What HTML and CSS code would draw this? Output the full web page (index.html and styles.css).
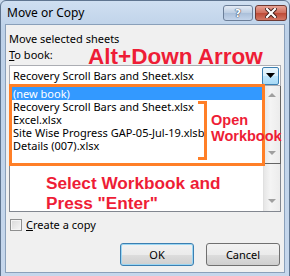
FILE: index.html
```html
<!DOCTYPE html>
<html lang="en">
<head>
    <meta charset="UTF-8">
    <title>Move or Copy</title>
    <link rel="stylesheet" href="styles.css">
</head>
<body>

    <div class="window">
        <div class="titlebar">
            <span class="title">Move or Copy</span>
            <div class="caption-buttons">
                <button class="cap-btn help">?</button>
                <button class="cap-btn close">
                    <svg width="12" height="10" viewBox="0 0 12 10">
                        <path d="M2 1 L10 9 M10 1 L2 9" stroke="#3b1a16" stroke-width="4" stroke-linecap="square"/>
                        <path d="M2 1 L10 9 M10 1 L2 9" stroke="#fff" stroke-width="2.2" stroke-linecap="square"/>
                    </svg>
                </button>
            </div>
        </div>

        <div class="client">
            <div class="label">Move selected sheets</div>
            <div class="label"><u>T</u>o book:</div>

            <div class="combo">
                <span class="combo-text">Recovery Scroll Bars and Sheet.xlsx</span>
                <span class="combo-arrow">
                    <svg width="9" height="5" viewBox="0 0 9 5"><path d="M0 0 H9 L4.5 5 Z" fill="#000"/></svg>
                </span>
            </div>

            <div class="dropdown">
                <div class="items">
                    <div class="item selected">(new book)</div>
                    <div class="item">Recovery Scroll Bars and Sheet.xlsx</div>
                    <div class="item">Excel.xlsx</div>
                    <div class="item">Site Wise Progress GAP-05-Jul-19.xlsb</div>
                    <div class="item">Details (007).xlsx</div>
                </div>
                <div class="scrollbar">
                    <span class="arrow up"></span>
                    <span class="arrow down"></span>
                </div>
            </div>

            <div class="listbox">
                <div class="list-area"></div>
                <div class="scrollbar">
                    <span class="arrow down"></span>
                </div>
            </div>

            <label class="check-row">
                <span class="checkbox"></span>
                <span><u>C</u>reate a copy</span>
            </label>

            <div class="buttons">
                <button class="btn default">OK</button>
                <button class="btn">Cancel</button>
            </div>

            <!-- annotations painted over the dialog -->
            <div class="note note-keys">Alt+Down Arrow</div>
            <div class="mark-box"></div>
            <div class="bracket"></div>
            <div class="note note-open">Open<br>Workbook</div>
            <div class="note note-select">Select Workbook and<br>Press "Enter"</div>
        </div>
    </div>

</body>
</html>
```

FILE: styles.css
```css
body {
    margin: 0;
    width: 290px;
    height: 276px;
    overflow: hidden;
    background: #c9d9ec;
    font-family: 'Noto Sans', 'Open Sans', sans-serif;
    font-size: 11px;
    color: #000;
}
.window {
    width: 288px;
    height: 282px;
    border: 1px solid #5f7590;
    border-radius: 6px 6px 0 0;
    background: linear-gradient(#cfdff1, #bdd1e8 30px, #c6d7ec);
}
.titlebar {
    height: 23px;
    display: flex;
    justify-content: space-between;
    align-items: flex-start;
    padding-left: 6px;
}
.title {
    font-size: 12px;
    margin-top: 3px;
    color: #000;
}
.caption-buttons {
    display: flex;
    gap: 2px;
    margin-top: 4px;
    margin-right: 2px;
}
.cap-btn {
    height: 16px;
    padding: 0;
    border-radius: 3px;
    display: flex;
    align-items: center;
    justify-content: center;
    font-family: 'DejaVu Sans', sans-serif;
    font-weight: bold;
    font-size: 11px;
}
.help {
    width: 30px;
    border: 1px solid #6c7f99;
    background: linear-gradient(#e3ebf5, #bccde2 50%, #aabfd9 51%, #c3d4ea);
    color: #fff;
    text-shadow: 0 0 1px #3d4d66, 0 0 1px #3d4d66, 0 0 1px #3d4d66;
}
.close {
    width: 32px;
    border: 1px solid #6e3a33;
    background: linear-gradient(#e7a295, #cf6d5b 50%, #bd4a36 51%, #d27664);
}
.client {
    position: relative;
    margin: 0 4px;
    height: 247px;
    background: #f0f0f0;
    border: 1px solid #8aa0ba;
    padding: 0 0 0 3px;
}
.label {
    height: 16px;
    line-height: 16px;
}
.label:first-child {
    margin-top: 6px;
}
.combo {
    display: flex;
    align-items: center;
    justify-content: space-between;
    width: 270px;
    height: 19px;
    margin-top: 2px;
    border: 1px solid #abadb3;
    background: #fff;
}
.combo-text {
    padding-left: 3px;
}
.combo-arrow {
    width: 15px;
    height: 16px;
    margin-right: 1px;
    border: 1px solid #3c7fb1;
    border-radius: 2px;
    background: linear-gradient(#eaf6fd, #d9f0fc 50%, #bee6fd 51%, #a7d9f5);
    display: flex;
    align-items: center;
    justify-content: center;
}
.dropdown {
    display: flex;
    width: 270px;
    height: 77px;
    border: 1px solid #646464;
    border-top: none;
    background: #fff;
}
.items {
    flex: 1;
    padding-top: 1px;
}
.item {
    height: 13px;
    line-height: 13px;
    padding-left: 3px;
    white-space: nowrap;
}
.item.selected {
    background: #3399ff;
    color: #fff;
}
.scrollbar {
    position: relative;
    width: 16px;
    background: linear-gradient(90deg, #e6e6e6, #f4f4f4 40%, #ececec);
    border-left: 1px solid #e0e0e0;
}
.arrow {
    position: absolute;
    left: 4px;
    width: 0;
    height: 0;
    border-left: 4px solid transparent;
    border-right: 4px solid transparent;
}
.arrow.up {
    top: 7px;
    border-bottom: 4px solid #a0a0a0;
}
.arrow.down {
    bottom: 8px;
    border-top: 4px solid #a0a0a0;
}
.listbox {
    display: flex;
    width: 270px;
    height: 47px;
    border: 1px solid #828790;
    border-top: none;
    background: #fff;
}
.list-area {
    flex: 1;
}
.check-row {
    display: flex;
    align-items: center;
    gap: 4px;
    margin-top: 6px;
    margin-left: 1px;
    height: 13px;
    line-height: 13px;
}
.checkbox {
    width: 12px;
    height: 12px;
    border: 1px solid #8e8f8f;
    background: linear-gradient(135deg, #d8d8d8, #f6f6f6);
    box-sizing: border-box;
    box-shadow: inset 0 0 0 1px #f4f4f4;
}
.buttons {
    display: flex;
    justify-content: flex-end;
    gap: 12px;
    margin-top: 12px;
    padding-right: 4px;
}
.btn {
    width: 74px;
    height: 23px;
    padding: 0;
    font-family: 'Noto Sans', sans-serif;
    font-size: 11px;
    color: #000;
    border: 1px solid #707070;
    border-radius: 3px;
    background: linear-gradient(#f2f2f2, #ebebeb 50%, #dddddd 51%, #cfcfcf);
}
.btn.default {
    border-color: #3c7fb1;
    box-shadow: inset 0 0 0 1px #9bd6f3;
}
.note {
    position: absolute;
    color: #ee1d36;
    font-family: 'Liberation Sans', Arial, sans-serif;
    font-weight: bold;
    white-space: nowrap;
}
.note-keys {
    left: 82px;
    top: 19px;
    font-size: 22.5px;
    line-height: 26px;
}
.note-open {
    left: 205px;
    top: 87px;
    font-size: 14.5px;
    line-height: 16px;
}
.note-select {
    left: 40px;
    top: 148px;
    font-size: 17.2px;
    line-height: 20px;
}
.mark-box {
    position: absolute;
    left: 3px;
    top: 59px;
    width: 256px;
    height: 82px;
    box-sizing: border-box;
    border: 3px solid #ff7f27;
}
.bracket {
    position: absolute;
    left: 192px;
    top: 76px;
    width: 9px;
    height: 59px;
    box-sizing: border-box;
    border: 3px solid #ff7f27;
    border-left: none;
}
```
